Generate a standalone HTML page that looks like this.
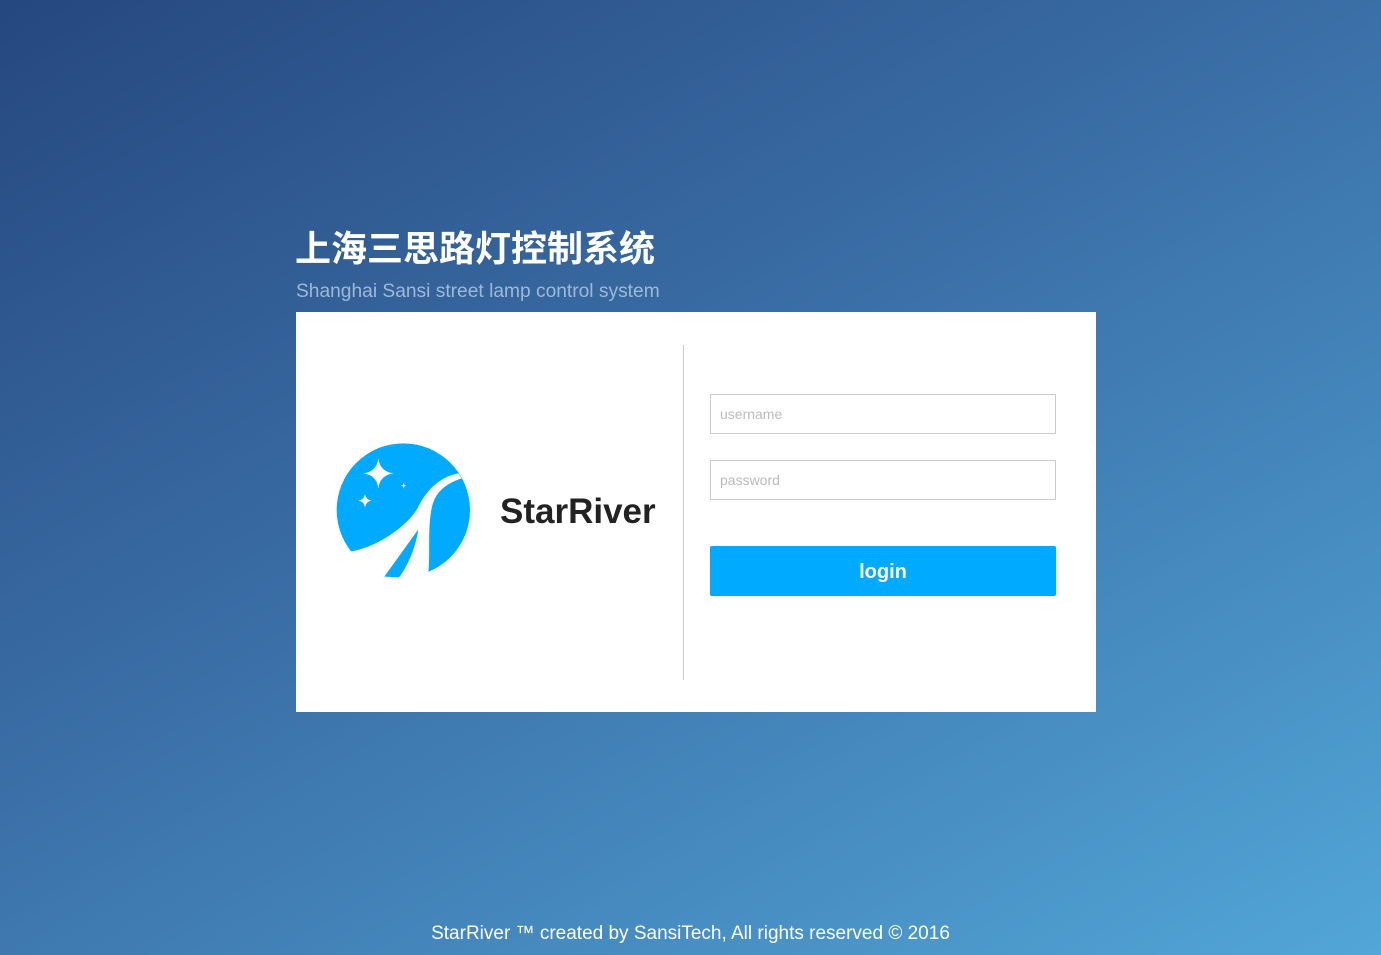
<!DOCTYPE html>
<html><head><meta charset="utf-8"><style>
html,body{margin:0;width:1381px;height:955px;overflow:hidden}
body{background:linear-gradient(150deg,#26477f 0%,#3a6fa6 45%,#52a6d8 100%);font-family:"Liberation Sans","Noto Sans CJK SC",sans-serif;position:relative}
.t{position:absolute;left:295px;top:222px;color:#fff;font-size:36px;font-weight:bold;font-family:"Noto Sans CJK SC",sans-serif;line-height:48px}
.s{position:absolute;left:296px;top:281px;color:#9fb8d8;font-size:19.2px;white-space:nowrap}
.card{position:absolute;left:296px;top:312px;width:800px;height:400px;background:#fff}
.div{position:absolute;left:387px;top:33px;width:1px;height:335px;background:#ccc}
.in{position:absolute;left:414px;height:38px;border:1px solid #ccc;color:#bbb;font-size:14px;line-height:38px;padding-left:9px;width:335px}
.btn{position:absolute;left:414px;top:234px;width:346px;height:50px;background:#00aaff;border-radius:2px;color:#fff;font-weight:bold;font-size:20px;text-align:center;line-height:52px}
.brand{position:absolute;left:204px;top:180px;font-size:35px;font-weight:bold;color:#222}
.f{position:absolute;left:0;right:0;top:923px;text-align:center;color:#fff;font-size:19px}
</style></head><body>
<div class="t">上海三思路灯控制系统</div>
<div class="s">Shanghai Sansi street lamp control system</div>
<div class="card">
<svg style="position:absolute;left:34px;top:118px" width="150" height="160" viewBox="0 0 450 480">
<circle cx="220" cy="240" r="200" fill="#00aaff"/>
<path d="M385,130 C330,140 290,180 265,230 C240,280 150,350 60,365 L40,480 L298,480 L295,430 C300,380 295,320 300,270 C305,210 320,170 395,145 Z" fill="#fff"/>
<path d="M163,440 L265,298 C258,345 238,400 207,442 Z" fill="#00aaff"/>
<path d="M145,85 Q150,125 190,130 Q150,135 145,175 Q140,135 100,130 Q140,125 145,85Z" fill="#fff"/>
<path d="M105,192 Q108,210 125,212 Q108,214 105,232 Q102,214 85,212 Q102,210 105,192Z" fill="#fff"/>
<path d="M221,158 L223,165 L229,167 L223,169 L221,176 L219,169 L213,167 L219,165Z" fill="#fff"/>
</svg>
<div class="brand">StarRiver</div>
<div class="div"></div>
<div class="in" style="top:82px">username</div>
<div class="in" style="top:148px">password</div>
<div class="btn">login</div>
</div>
<div class="f">StarRiver ™ created by SansiTech, All rights reserved © 2016</div>
</body></html>
